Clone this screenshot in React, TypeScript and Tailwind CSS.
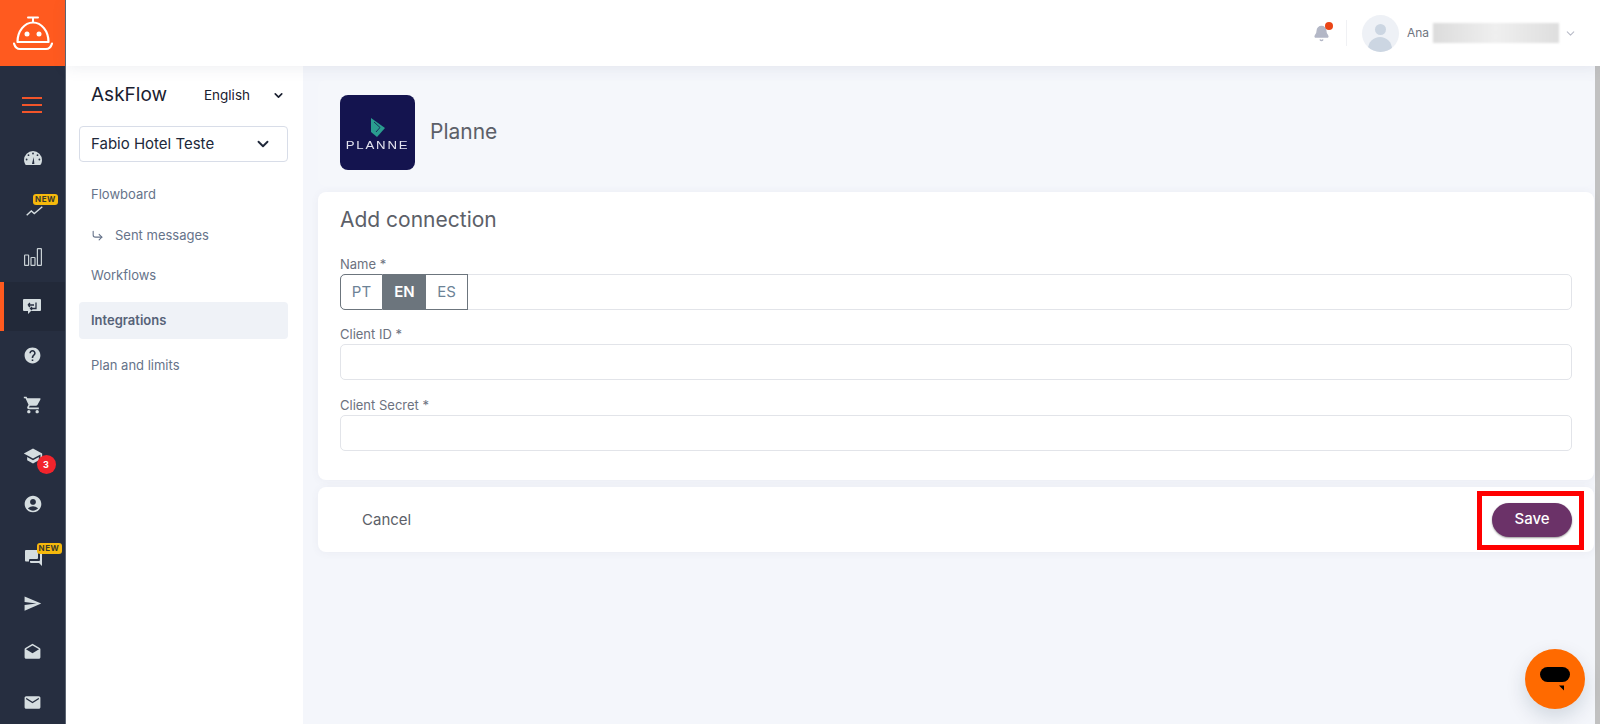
import { Bell, ChevronDown, CornerDownRight } from 'lucide-react'
import {
  MdDrafts,
  MdEmail,
  MdAccountCircle,
  MdHelp,
  MdSchool,
  MdSend,
  MdShoppingCart,
} from 'react-icons/md'

function BotLogo() {
  return (
    <svg viewBox="0 0 40 35" className="w-[40px] h-[35px]" fill="none">
      <path d="M15 1.500h10M20 2v4" stroke="#fff" strokeWidth="2" strokeLinecap="round" />
      <path d="M4.500 26c0-11 7-19.500 15.500-19.500S35.500 15 35.500 26z" stroke="#fff" strokeWidth="2.200" strokeLinejoin="round" />
      <circle cx="14" cy="18" r="2.500" fill="#fff" />
      <circle cx="26" cy="18" r="2.500" fill="#fff" />
      <path d="M1 27.500c1 3.500 3 5.500 6 5.500h26c3 0 5-2 6-5.500" stroke="#fff" strokeWidth="2.200" strokeLinecap="round" />
    </svg>
  )
}

function GaugeIcon() {
  return (
    <svg viewBox="0 0 18 14" className="w-[18px] h-[14px]">
      <path d="M9 0a9 9 0 0 1 9 9c0 1.800-.5 3.400-1.300 4.600a.8.8 0 0 1-.7.400H2a.8.8 0 0 1-.7-.400A9 9 0 0 1 0 9a9 9 0 0 1 9-9z" fill="#d5dde0" />
      <circle cx="9" cy="2.500" r="0.900" fill="#262e40" />
      <circle cx="4.500" cy="4.200" r="0.900" fill="#262e40" />
      <circle cx="13.500" cy="4.200" r="0.900" fill="#262e40" />
      <circle cx="2.600" cy="8.500" r="0.900" fill="#262e40" />
      <circle cx="15.400" cy="8.500" r="0.900" fill="#262e40" />
      <path d="M8 13l1.600-7 .8 7z" fill="#262e40" />
    </svg>
  )
}

function TrendIcon() {
  return (
    <svg viewBox="0 0 17 10" className="w-[17px] h-[10px]" fill="none">
      <path d="M.7 9.300l4.600-4.300 3 2.500L16.300.8" stroke="#d5dde0" strokeWidth="1.400" />
    </svg>
  )
}

function BarsIcon() {
  return (
    <svg viewBox="0 0 18 18" className="w-[18px] h-[18px]" fill="none" stroke="#c9d1d5" strokeWidth="1.200">
      <rect x="0.600" y="7" width="4" height="10.400" rx="0.500" />
      <rect x="7" y="9.500" width="4" height="7.900" rx="0.500" />
      <rect x="13.400" y="0.600" width="4" height="16.800" rx="0.500" />
    </svg>
  )
}

function ExchangeChatIcon() {
  return (
    <svg viewBox="0 0 18 15" className="w-[18px] h-[15px]">
      <path d="M1 0h16a1 1 0 0 1 1 1v10a1 1 0 0 1-1 1H8l-3 3v-3H1a1 1 0 0 1-1-1V1a1 1 0 0 1 1-1z" fill="#d5dde0" />
      <path d="M5 6h6M5 6l2-2M5 6l2 2M13 3.500v6H7.500M9 8l-1.500 1.500L9 11" stroke="#262e40" strokeWidth="1.300" fill="none" />
    </svg>
  )
}

function ChatsIcon() {
  return (
    <svg viewBox="0 0 17 16" className="w-[17px] h-[16px]">
      <path d="M1 0h11a1 1 0 0 1 1 1v7a1 1 0 0 1-1 1H5a1 1 0 0 0-1 1v1.500H1a1 1 0 0 1-1-1V1a1 1 0 0 1 1-1z" fill="#d5dde0" />
      <path d="M15 2h1a1 1 0 0 1 1 1v13l-3-3H6a1 1 0 0 1-1-1v-1h9a1 1 0 0 0 1-1z" fill="#d5dde0" />
    </svg>
  )
}

function PlanneLogo() {
  return (
    <div className="w-[75px] h-[75px] rounded-lg bg-[#14144f] flex flex-col items-center justify-center shrink-0">
      <svg viewBox="0 0 14 19" className="w-[14px] h-[19px] mt-[5px]">
        <path d="M0 0l14 10-8 9-6-5z" fill="#2a9d8f" />
        <path d="M3 4l6 5.500-4 4.500" fill="none" stroke="#14144f" strokeWidth="0.800" />
      </svg>
      <span className="mt-[2px] text-[11px] leading-[12px] tracking-[1.500px] scale-x-[1.200] text-[#e4e4f0] font-['Liberation_Sans',sans-serif]">
        PLANNE
      </span>
    </div>
  )
}

const iconClass = 'text-[#d5dde0]'

function NewBadge({ className }: { className: string }) {
  return (
    <span className={`absolute w-[25px] h-[11px] rounded-[3px] bg-[#f6b90c] text-[#3a3a2a] text-[8px] leading-[11px] text-center font-bold tracking-[0.5px] ${className}`}>
      NEW
    </span>
  )
}

function IconRail() {
  const row = 'h-[49.500px] shrink-0 flex items-center justify-center'
  return (
    <aside className="w-[66px] shrink-0 h-full bg-[#262e40] flex flex-col border-r border-[#5b6472] overflow-hidden">
      <div className="h-[66px] shrink-0 bg-[#ff5a1f] flex items-center justify-center -mr-px pr-px">
        <BotLogo />
      </div>
      <div className="h-[64px] shrink-0 flex flex-col items-center justify-center gap-[5px] pt-[13px] pr-[1px]">
        <span className="w-[20px] h-[2px] bg-[#f2552a]" />
        <span className="w-[20px] h-[2px] bg-[#f2552a]" />
        <span className="w-[20px] h-[2px] bg-[#f2552a]" />
      </div>
      <nav className="flex flex-col pt-[3px]">
        <div className={row}><GaugeIcon /></div>
        <div className={`${row} pt-[8px] pl-[4px]`}>
          <span className="relative flex">
            <TrendIcon />
            <NewBadge className="left-[7px] -top-[12px]" />
          </span>
        </div>
        <div className={row}><BarsIcon /></div>
        <div className={`${row} bg-[#222939] border-l-4 border-[#ff5a1f] pr-[5px] pt-[1px]`}>
          <ExchangeChatIcon />
        </div>
        <div className={row}><MdHelp size={19} className={iconClass} /></div>
        <div className={row}><MdShoppingCart size={20} className={iconClass} /></div>
        <div className={`${row} pt-[2px]`}>
          <span className="relative flex">
            <MdSchool size={20} className={iconClass} />
            <span className="absolute left-[14px] top-[9px] w-[19px] h-[19px] rounded-full bg-[#f2242c] text-white text-[9px] font-bold flex items-center justify-center">
              3
            </span>
          </span>
        </div>
        <div className={row}><MdAccountCircle size={20} className={iconClass} /></div>
        <div className={`${row} pt-[9px] pl-[1px]`}>
          <span className="relative flex">
            <ChatsIcon />
            <NewBadge className="left-[12px] -top-[7px]" />
          </span>
        </div>
        <div className={row}><MdSend size={19} className={iconClass} /></div>
        <div className={row}><MdDrafts size={19} className={iconClass} /></div>
        <div className={row}><MdEmail size={19} className={iconClass} /></div>
      </nav>
    </aside>
  )
}

function SubNav() {
  return (
    <aside className="w-[237px] shrink-0 bg-white pl-[13px] pr-[15px] pt-[16px]">
      <div className="flex items-center justify-between h-[27px] pl-[12px] pr-[3px]">
        <span className="text-[19px] text-[#1a2030]">AskFlow</span>
        <span className="flex items-center gap-[22px] text-[13.500px] text-[#1a2030]">
          English
          <ChevronDown size={13} strokeWidth={3} />
        </span>
      </div>
      <div className="mt-[17px] h-[36px] rounded border border-[#d8dde8] flex items-center justify-between pl-[11px] pr-[15px] text-[15px] text-[#20283a]">
        Fabio Hotel Teste
        <ChevronDown size={18} strokeWidth={2.500} />
      </div>
      <ul className="mt-[12px] text-[13px] text-[#66738a]">
        <li className="h-[41px] flex items-center pl-[12px]">Flowboard</li>
        <li className="h-[41px] flex items-center pl-[12px] gap-[11px]">
          <CornerDownRight size={13} />
          Sent messages
        </li>
        <li className="h-[40px] flex items-center pl-[12px]">Workflows</li>
        <li className="h-[37px] mt-[6px] flex items-center pl-[12px] rounded bg-[#eff2f7] font-semibold text-[#566278]">
          Integrations
        </li>
        <li className="h-[53px] flex items-center pl-[12px]">Plan and limits</li>
      </ul>
    </aside>
  )
}

function Field({ label, className, children }: { label: string; className: string; children?: React.ReactNode }) {
  return (
    <div className={className}>
      <label className="block text-[13px] leading-[16px] text-[#6c7280]">{label}</label>
      <div className="mt-[2px] h-[36px] rounded-[5px] border border-[#e2e4e9] bg-white flex">{children}</div>
    </div>
  )
}

const cardShadow = 'shadow-[0_1px_8px_rgba(80,90,120,0.06)]'

export default function App() {
  return (
    <div className="relative h-[724px] w-[1600px] flex overflow-hidden bg-[#f4f6fb] font-['Inter',sans-serif]">
      <IconRail />
      <div className="flex-1 flex flex-col min-w-0">
        <header className="relative z-10 h-[66px] shrink-0 bg-white shadow-[0_2px_14px_rgba(90,100,130,0.1)] flex items-center justify-end">
          <div className="relative mr-[16px]">
            <Bell size={17} className="text-[#b3b7c6] fill-[#b3b7c6]" />
            <span className="absolute -top-[3px] -right-[3px] w-[8px] h-[8px] rounded-full bg-[#ea4516]" />
          </div>
          <span className="w-px h-[26px] bg-[#f0f1f4] mr-[15px]" />
          <div className="w-[37px] h-[37px] rounded-full bg-[#eef1f6] overflow-hidden flex flex-col items-center mr-[8px]">
            <span className="w-[11px] h-[11px] rounded-full bg-[#ccd6e2] mt-[9px] shrink-0" />
            <span className="w-[24px] h-[24px] rounded-full bg-[#ccd6e2] mt-[2px] shrink-0" />
          </div>
          <span className="text-[12px] text-[#70757f] mr-[4px]">Ana</span>
          <span className="w-[126px] h-[20px] bg-gradient-to-r from-[#dcdcdc] via-[#efefef] to-[#dedede] blur-[1px]" />
          <ChevronDown size={13} className="text-[#b9bcc8] ml-[5px] mr-[23px]" />
        </header>
        <div className="flex-1 flex min-h-0">
          <SubNav />
          <main className="flex-1 min-w-0 relative pl-[15px] pr-[1px] pt-[14px] border-r-[5px] border-[#c1c1c1]">
            <section className="h-[106px] rounded-lg flex items-center pl-[22px] pb-[2px] gap-[15px] bg-[#f5f7fb]">
              <PlanneLogo />
              <h1 className="text-[21px] text-[#5c6068]">Planne</h1>
            </section>
            <section className={`mt-[6px] h-[288px] rounded-lg bg-white px-[22px] pt-[15px] ${cardShadow}`}>
              <h2 className="text-[21px] leading-[26px] text-[#5c6068]">Add connection</h2>
              <Field label="Name *" className="mt-[23px]">
                <span className="w-[43px] h-[36px] -my-px -ml-px rounded-l-[5px] border border-[#6c757d] flex items-center justify-center text-[15px] text-[#6c8296]">PT</span>
                <span className="w-[43px] h-[36px] -my-px bg-[#6c757d] text-white font-semibold flex items-center justify-center text-[15px]">EN</span>
                <span className="w-[42px] h-[36px] -my-px border border-[#6c757d] border-l-0 flex items-center justify-center text-[15px] text-[#6c8296]">ES</span>
              </Field>
              <Field label="Client ID *" className="mt-[16px]" />
              <Field label="Client Secret *" className="mt-[17px]" />
            </section>
            <section className={`mt-[7px] h-[65px] rounded-lg bg-white flex items-center justify-between pl-[44px] pr-[22px] ${cardShadow}`}>
              <span className="text-[15px] pt-[2px] text-[#5c6068]">Cancel</span>
              <button className="relative w-[80px] h-[34px] rounded-full bg-[#6b3268] text-white text-[15px] font-medium shadow-[0_1px_2px_rgba(0,0,0,0.4)]">
                Save
                <span className="absolute -left-[15px] -right-[12px] -top-[12px] -bottom-[13px] border-[5px] border-[#ff0000]" />
              </button>
            </section>
          </main>
        </div>
      </div>
      <button className="absolute left-[1525px] top-[649px] w-[60px] h-[60px] rounded-full bg-[#ff6a00] flex items-center justify-center shadow-[0_8px_20px_rgba(0,40,60,0.15)]">
        <svg viewBox="0 0 30 24" className="w-[30px] h-[24px]">
          <rect x="0" y="0" width="30" height="15" rx="7.500" fill="#000" />
          <path d="M19 18.500h5v5z" fill="#000" />
        </svg>
      </button>
    </div>
  )
}
